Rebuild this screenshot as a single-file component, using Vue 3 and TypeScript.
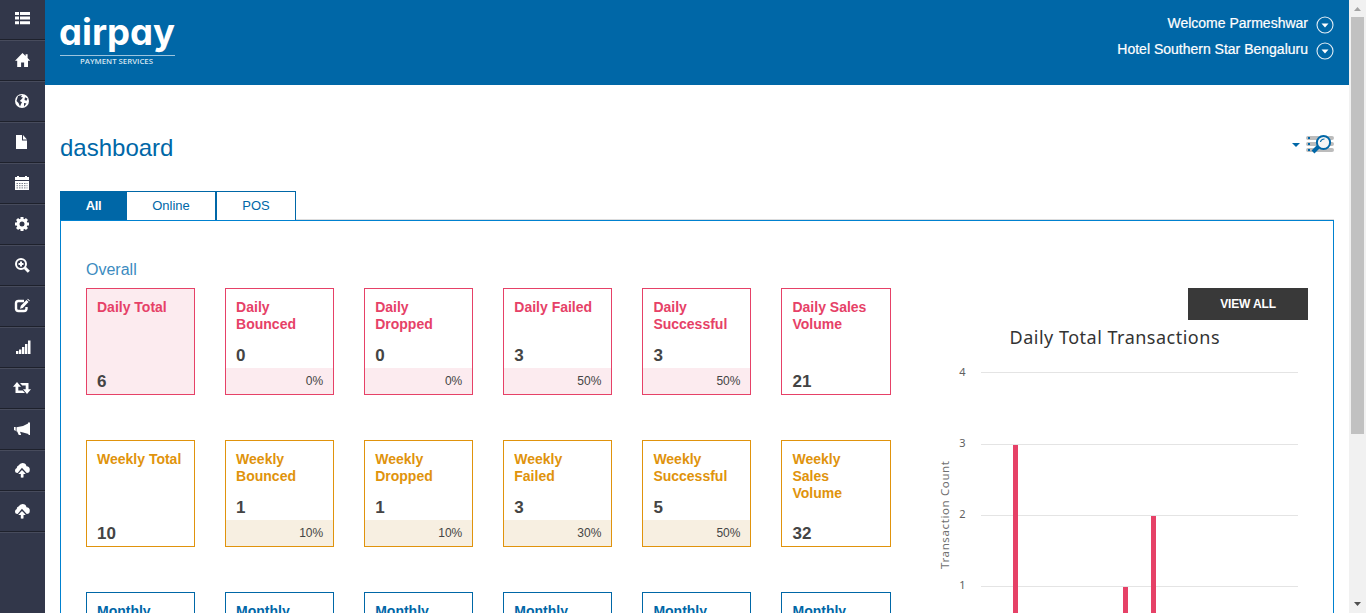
<script setup lang="ts">
interface Card { title: string; value: string; percent?: string; filled?: boolean }
interface Period { name: string; cards: Card[] }

const icons: string[] = [
  'list', 'home', 'globe', 'file', 'calendar', 'gear', 'zoom', 'edit', 'signal', 'retweet', 'horn', 'cloud', 'cloud',
]

const teeth = [0, 45, 90, 135, 180, 225, 270, 315]

const periods: Period[] = [
  {
    name: 'daily',
    cards: [
      { title: 'Daily Total', value: '6', filled: true },
      { title: 'Daily Bounced', value: '0', percent: '0%' },
      { title: 'Daily Dropped', value: '0', percent: '0%' },
      { title: 'Daily Failed', value: '3', percent: '50%' },
      { title: 'Daily Successful', value: '3', percent: '50%' },
      { title: 'Daily Sales Volume', value: '21' },
    ],
  },
  {
    name: 'weekly',
    cards: [
      { title: 'Weekly Total', value: '10' },
      { title: 'Weekly Bounced', value: '1', percent: '10%' },
      { title: 'Weekly Dropped', value: '1', percent: '10%' },
      { title: 'Weekly Failed', value: '3', percent: '30%' },
      { title: 'Weekly Successful', value: '5', percent: '50%' },
      { title: 'Weekly Sales Volume', value: '32' },
    ],
  },
  {
    name: 'monthly',
    cards: ['', '', '', '', '', ''].map(() => ({ title: 'Monthly', value: '' })),
  },
]

const ticks = [
  { label: '4', y: 52, base: 56 },
  { label: '3', y: 124, base: 127 },
  { label: '2', y: 195, base: 198 },
  { label: '1', y: 266, base: 269 },
]
const bars = [
  { x: 78, y: 125 },
  { x: 188, y: 267 },
  { x: 216, y: 196 },
]
</script>

<template>
  <div class="page">
    <nav class="sidebar">
      <a v-for="(icon, i) in icons" :key="i" class="nav-item">
        <svg class="nav-icon" width="20" height="16" viewBox="0 0 20 16" fill="#fff">
          <template v-if="icon === 'list'">
            <path d="M3 2h4v3H3zM8 2h10v3H8zM3 6.600h4v3H3zM8 6.600h10v3H8zM3 11.200h4v3H3zM8 11.200h10v3H8z" />
          </template>
          <path v-else-if="icon === 'home'" d="M10.500 1L3 8.800h2.200V15h3.900v-4.500h3V15H16V8.800h2.200L15.600 6V2.200h-2v1.900z" />
          <template v-else-if="icon === 'globe'">
            <circle cx="10" cy="8" r="7" />
            <path d="M6 3l4-1-1 2 2 .5-1.500 1.800L7.800 8 10 9.300 9 11l-1 2.500L6.500 10 4.500 8zM13 4.200l2.500 1.300-1 2.300L12.500 7zM12 10l2.500.5L12 13.500z" fill="#32374a" />
          </template>
          <template v-else-if="icon === 'file'">
            <path d="M4 1h6v5.500h5V15H4zM11 1l4 4.500h-4z" />
          </template>
          <template v-else-if="icon === 'calendar'">
            <path d="M3 2h2V1h2v1h6V1h2v1h2v3H3zM3 6h14v9H3z" />
            <path d="M4.500 8.500h11M4.500 10.700h11M4.500 12.900h11" stroke="#777c89" stroke-width="1" stroke-dasharray="1.500 1" fill="none" />
          </template>
          <template v-else-if="icon === 'gear'">
            <rect v-for="a in teeth" :key="a" x="8.500" y="1" width="3" height="4" :transform="`rotate(${a} 10 8)`" />
            <circle cx="10" cy="8" r="4" fill="none" stroke="#fff" stroke-width="3" />
          </template>
          <template v-else-if="icon === 'zoom'">
            <g fill="none" stroke="#fff">
              <circle cx="9" cy="7" r="5" stroke-width="2" />
              <path d="M12.800 10.800l4 4" stroke-width="3" />
              <path d="M6.500 7h5M9 4.500v5" stroke-width="2" />
            </g>
          </template>
          <template v-else-if="icon === 'edit'">
            <path d="M12 3H6.500Q4 3 4 5.500v5Q4 13 6.500 13h5.500q2.500 0 2.500-2.500V9" fill="none" stroke="#fff" stroke-width="2.400" />
            <path d="M8 10.800l.8-3L14.500 2l2 2-5.700 5.900zM15.200 1.300l.7-.6 2 2-.7.600z" />
          </template>
          <path v-else-if="icon === 'signal'" d="M4 12h2.400v3H4zM7 10.500h2.400V15H7zM10 8h2.400v7H10zM13 5h2.400v10H13zM16 1.500h2.500V15H16z" />
          <path v-else-if="icon === 'retweet'" d="M5 2L1 6.700h2.500V13H13l-2.300-2.500H6.300V6.700H9zM8 3h8.500v6.200H19L15 14l-4-4.800h2.700V5.500H10.300z" />
          <path v-else-if="icon === 'horn'" d="M18 1.500v12.500h-1.500v-1L11 11.500l-3-.8 1.200 3.300H6.800L5.200 10.500H4.500V6.200L11 5l5-2.500v-1zM2 6h1.700v4L2 9z" />
          <template v-else>
            <path d="M5.500 11Q3 11 3 8.500 3 6.500 4.800 6q-.2-2 1.700-2.500Q8 1 10.500 1q3.300 0 4 3.200 3.300.2 3.300 3.500 0 3.300-3.100 3.300z" />
            <path d="M10 7l5 5.500h-3V16H8.500v-3.500h-3z" stroke="#32374a" stroke-width="1.600" />
            <path d="M10 8l3.800 3.900h-2.400V15.500H8.800v-3.600H6.200z" />
          </template>
        </svg>
      </a>
    </nav>

    <div class="main">
      <header class="header">
        <svg class="logo" width="118" height="60" viewBox="0 0 118 60">
          <text class="brand" x="-1" y="34" textLength="116" lengthAdjust="spacingAndGlyphs">airpay</text>
          <rect x="0" y="44" width="115" height="1" fill="#9cc4de" />
          <text class="tagline" x="20" y="53" textLength="73" lengthAdjust="spacingAndGlyphs">PAYMENT SERVICES</text>
        </svg>
        <div class="account">
          <div v-for="label in ['Welcome Parmeshwar', 'Hotel Southern Star Bengaluru']" :key="label" class="account-row">
            <span>{{ label }}</span>
            <svg width="18" height="18" viewBox="0 0 18 18">
              <circle cx="9" cy="9" r="8" fill="none" stroke="#e1edf5" stroke-width="1.100" />
              <path d="M5.500 7.500h7L9 11.500z" fill="#fff" />
            </svg>
          </div>
        </div>
      </header>

      <div class="heading">
        <h1>dashboard</h1>
        <svg class="filter" width="44" height="22" viewBox="0 0 44 22">
          <path d="M2 9h8l-4 4z" fill="#0067a7" />
          <path d="M18 4h24M18 10h24M18 16h24" stroke="#bcbcbc" stroke-width="4" stroke-linecap="round" />
          <path d="M18 3h2v2h-2zM18 9h2v2h-2zM18 15h2v2h-2z" fill="#0067a7" />
          <path d="M29 12l-6 6" stroke="#0067a7" stroke-width="4" />
          <circle cx="33.500" cy="8.500" r="6.600" fill="#f5f5f5" stroke="#0067a7" stroke-width="2" />
          <path d="M30.500 8q.5-3 4-3" stroke="#0067a7" stroke-width="1.200" fill="none" />
        </svg>
      </div>

      <div class="tabs">
        <div class="tab active">All</div>
        <div class="tab online">Online</div>
        <div class="tab pos">POS</div>
        <div class="rest"></div>
      </div>

      <section class="panel">
        <div class="stats">
          <h2>Overall</h2>
          <div v-for="p in periods" :key="p.name" class="cards" :class="p.name">
            <div v-for="(c, i) in p.cards" :key="i" class="card" :class="{ filled: c.filled }">
              <div class="title">{{ c.title }}</div>
              <div class="value">{{ c.value }}</div>
              <div v-if="c.percent" class="percent">{{ c.percent }}</div>
            </div>
          </div>
        </div>
        <div class="chart">
          <button class="view-all">VIEW ALL</button>
          <svg class="plot" width="373" height="293" viewBox="0 0 373 293">
            <text class="chart-title" x="74.500" y="24" textLength="210">Daily Total Transactions</text>
            <g v-for="t in ticks" :key="t.label">
              <rect x="46" :y="t.y" width="317" height="1" fill="#e4e4e4" />
              <text class="tick" x="30.500" :y="t.base" text-anchor="end">{{ t.label }}</text>
            </g>
            <rect v-for="b in bars" :key="b.x" :x="b.x" :y="b.y" width="5" height="170" fill="#e64167" />
            <text class="axis" transform="translate(14 249) rotate(-90)" textLength="108">Transaction Count</text>
          </svg>
        </div>
      </section>
    </div>

    <div class="scrollbar">
      <svg width="17" height="17" viewBox="0 0 17 17"><path d="M5 11h7L8.500 7z" fill="#a3a3a3" /></svg>
      <div class="thumb"></div>
      <svg width="17" height="17" viewBox="0 0 17 17"><path d="M5 6h7l-3.500 4z" fill="#505050" /></svg>
    </div>
  </div>
</template>

<style>
body { overflow: hidden; background: #fff; }
</style>

<style scoped>
.page { display: flex; width: 1366px; height: 613px; overflow: hidden; font-family: "Liberation Sans", Arial, sans-serif; }
.page * { box-sizing: border-box; }
.sidebar { width: 45px; flex: none; height: 614px; margin-top: -1px; background: #32374a; }
.nav-item { display: flex; height: 41px; padding: 0 0 2px 12px; align-items: center; border-top: 1px solid #474b5c; border-bottom: 1px solid #1e212c; }
.nav-item:first-child .nav-icon { margin-top: -1px; }
.nav-item:last-child { box-shadow: 0 1px #474b5c; }
.nav-icon { display: block; }
.main { width: 1304px; flex: none; }
.header { display: flex; justify-content: space-between; height: 85px; padding: 11px 15px 0; background: #0067a7; }
.logo { display: block; overflow: visible; }
.brand { font-family: "Inter", sans-serif; font-size: 36px; font-weight: 700; font-feature-settings: "cv11" 1, "ss04" 0; fill: #fff; }
.tagline { font: 600 7px "Open Sans", sans-serif; fill: #d5e5f0; }
.account { padding-top: 4px; }
.account-row { display: flex; justify-content: flex-end; align-items: flex-start; gap: 8px; height: 26px; font-size: 14px; line-height: 16px; color: #fff; -webkit-text-stroke: .2px #fff; }
.account-row svg { margin-top: 1px; }
.heading { display: flex; justify-content: space-between; height: 106px; padding: 48px 15px 0 15px; }
h1 { margin: 0; font-size: 24px; font-weight: 400; line-height: 29px; color: #0067a7; }
.filter { display: block; margin-top: 1px; }
.tabs { display: flex; height: 29px; padding: 0 15px; font-size: 13px; color: #0067a7; }
.tab { border: 1px solid #0067a7; border-bottom: 0; text-align: center; line-height: 27px; }
.active { width: 67px; background: #0067a7; color: #fff; font-weight: 700; letter-spacing: -.3px; }
.online { width: 89px; border-left: 0; }
.pos { width: 80px; }
.rest { flex: 1; border-bottom: 1px solid #ddd; }
.panel { display: flex; width: 1274px; height: 420px; margin-left: 15px; border: 1px solid #0081d0; padding-left: 25px; }
.stats { width: 849px; flex: none; padding-top: 39px; }
h2 { margin: 0 0 8px; font-size: 16px; font-weight: 400; line-height: 20px; color: #3c8bc0; }
.cards { display: grid; grid-template-columns: repeat(6, 109.1px); gap: 30px; height: 107px; margin-bottom: 45px; }
.card { display: flex; flex-direction: column; height: 107px; border: 1px solid; color: #e64167; }
.daily .card { color: #e64167; }
.weekly .card { color: #e0930c; }
.monthly .card { color: #0067a7; }
.daily .filled, .daily .percent { background: #fcebef; }
.weekly .percent { background: #f7efe1; }
.title { padding: 10px 10px 0 10px; font-size: 14px; font-weight: 700; line-height: 17px; }
.value { margin-top: auto; padding-left: 10px; font-size: 17px; font-weight: 700; line-height: 20px; padding-bottom: 2px; color: #444; }
.percent { height: 26px; padding-right: 10px; text-align: right; font-size: 12px; line-height: 26px; color: #444; }
.chart { display: flex; flex-direction: column; width: 373px; padding-top: 67px; }
.view-all { align-self: flex-end; width: 120px; height: 32px; padding: 0; border: 0; background: #393939; color: #fff; font: 700 12px "Liberation Sans", sans-serif; letter-spacing: -.15px; }
.plot { display: block; }
.chart-title { font: 18px "Noto Sans", sans-serif; fill: #333; }
.tick { font: 11px "Noto Sans", sans-serif; fill: #606060; }
.axis { font: 11.5px "Noto Sans", sans-serif; fill: #707070; }
.scrollbar { display: flex; flex-direction: column; width: 17px; height: 613px; flex: none; background: #f1f1f1; }
.thumb { width: 13px; height: 417px; margin: 0 auto auto 2px; background: #c1c1c1; }
.scrollbar svg { flex: none; }
</style>
